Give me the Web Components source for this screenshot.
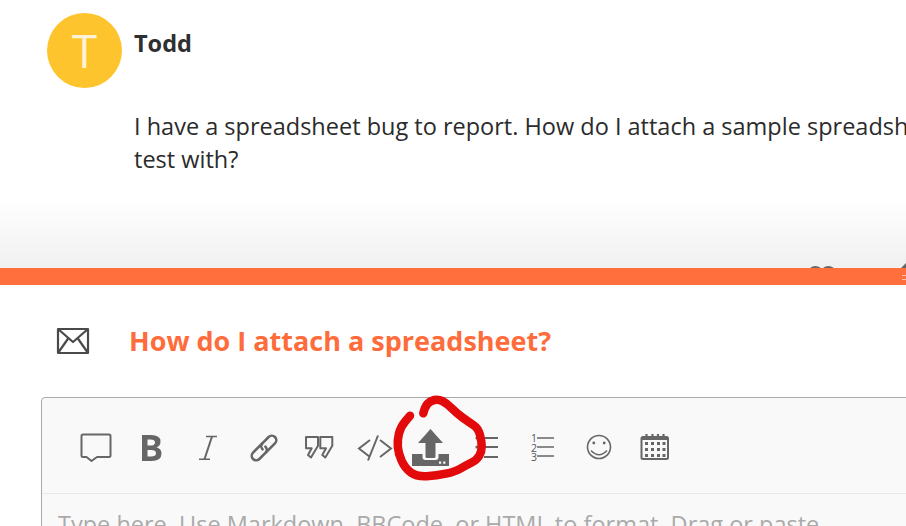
<!DOCTYPE html>
<html lang="en"><head><meta charset="utf-8"><title>Composer</title>
<style>
html,body{margin:0;height:526px;overflow:hidden;background:#fff}
body{font-family:"Open Sans",sans-serif;width:906px;position:relative}
</style></head><body>
<x-post name="Todd" initial="T">I have a spreadsheet bug to report. How do I attach a sample spreadsheet to test with?</x-post>
<x-composer title-text="How do I attach a spreadsheet?" placeholder="Type here. Use Markdown, BBCode, or HTML to format. Drag or paste images."></x-composer>
<script>
class XPost extends HTMLElement{constructor(){super();const n=this.getAttribute('name'),i=this.getAttribute('initial');
this.attachShadow({mode:'open'}).innerHTML=`<style>
:host{display:block;position:relative;height:268px;overflow:hidden;box-sizing:border-box;padding:13px 0 0 47px;background:linear-gradient(#fff 0,#fff 200px,#f0f0f0 268px)}
.row{display:flex;gap:12px;width:1000px}
.av{width:75px;height:75px;border-radius:50%;background:#fec42d;color:#fff3d6;font-size:46px;line-height:75px;text-align:center;flex:none}
.name{font-weight:700;font-size:23.500px;line-height:30px;color:#2f2f2f;margin-top:15px}
.msg{font-size:23.500px;line-height:33px;color:#2b2b2b;margin-top:52px;width:840px}
.peek{position:absolute;left:0;top:0}
</style><div class="row"><div class="av">${i}</div><div><div class="name">${n}</div><div class="msg"><slot></slot></div></div></div>
<svg class="peek" width="906" height="268" viewBox="0 0 906 268"><path d="M810 268Q815 264 821 268ZM823 268Q828 264 834 268ZM901 268L906 263V268Z" fill="#666"/></svg>`;}}
customElements.define('x-post',XPost);

const S='fill="none" stroke="#666"';
let calDots='';for(const y of [13,19,25])for(const x of [14,20,26,31.500])calDots+=`<rect x="${x}" y="${y}" width="3" height="3" fill="#666"/>`;
const I={
chat:`<path d="M12 5.500H38Q39.500 5.500 39.500 7V26.500Q39.500 28 38 28H26L20.500 32L15.500 28H12Q10.500 28 10.500 26.500V7Q10.500 5.500 12 5.500Z" ${S} stroke-width="2" stroke-linejoin="round"/>`,
bold:'<path fill-rule="evenodd" d="M15 6H24Q33.500 6 33.500 12.500Q33.500 17 29.500 18.200Q34.500 19.500 34.500 24.500Q34.500 32 24.500 32H15ZM20.500 10.500V16.500H23.500Q28 16.500 28 13.400Q28 10.500 23.500 10.500ZM20.500 21V27.500H24Q29 27.500 29 24.200Q29 21 24 21Z" fill="#666"/>',
italic:`<path d="M23 7.500H34M16 30.200H27" ${S} stroke-width="1.500"/><path d="M29 7.500L21.500 30.200" ${S} stroke-width="2"/>`,
link:`<g ${S} stroke-width="2.600" stroke-linecap="round" transform="rotate(-45 25 19)"><path d="M27 14.500H14a4.500 4.500 0 0 0 0 9H22.500a4.500 4.500 0 0 0 4.500 -4.500"/><path d="M23 23.500H36a4.500 4.500 0 0 0 0 -9H27.500a4.500 4.500 0 0 0 -4.500 4.500"/></g>`,
quote:`<path d="M11 8H23V16.700L16 28.500L13 26L16.700 19.300H11Z" ${S} stroke-width="2" stroke-linejoin="round"/><path d="M25.300 8H37.300V16.700L30.300 28.500L27.300 26L31 19.300H25.300Z" ${S} stroke-width="2" stroke-linejoin="round"/>`,
code:`<path d="M19 11L8 19.500L19 28M27 6.500L17 31.500M29 11L40 19.500L29 28" ${S} stroke-width="2"/>`,
upload:'<path fill-rule="evenodd" d="M5 25H15.500V28Q15.500 31 18.500 31H28.500Q31.500 31 31.500 28V25H42V37H5ZM32 32.500h2.200v2.200h-2.200zM36.200 32.500h2.200v2.200h-2.200z" fill="#666"/><path d="M23.500 0L36 14H28.500V27.500Q28.500 29 27 29H20Q18.500 29 18.500 27.500V14H11Z" fill="#666"/>',
list:'<path d="M21 9H35M21 18H35M21 28H35" stroke="#666" stroke-width="2"/><circle cx="14" cy="9" r="1.600" fill="#666"/><circle cx="14" cy="18" r="1.600" fill="#666"/><circle cx="14" cy="28" r="1.600" fill="#666"/>',
ol:'<path d="M18 9H35M18 18H35M18 27H35" stroke="#666" stroke-width="1.600"/>',
emoji:`<circle cx="24" cy="18" r="11.500" ${S} stroke-width="1.600"/><circle cx="18.800" cy="14" r="1.400" fill="#666"/><circle cx="29.200" cy="14" r="1.400" fill="#666"/><path d="M16 21.500Q24 30 32 21.500" ${S} stroke-width="1.500"/>`,
cal:`<path fill-rule="evenodd" d="M12 7H35.500Q38 7 38 9.500V28.500Q38 31 35.500 31H12Q9.500 31 9.500 28.500V9.500Q9.500 7 12 7ZM11.500 11V28.500Q11.500 29 12 29H35.500Q36 29 36 28.500V11Z" fill="#666"/><path d="M15.500 5v3M21.500 5v3M27 5v3M32.500 5v3" stroke="#666" stroke-width="2.200"/>${calDots}`
};
class XTool extends HTMLElement{constructor(){super();const k=this.getAttribute('icon');
const extra=k==='ol'?'<span class="n">1<br>2<br>3</span>':'';
this.attachShadow({mode:'open'}).innerHTML=`<style>
:host{display:block;position:relative;width:56px;height:36px;flex:none}
svg{display:block;width:48px;height:36px;margin:0 4px;overflow:visible}
.n{position:absolute;left:16px;top:5px;font-size:10.500px;line-height:9.500px;color:#555}
</style><svg viewBox="0 0 48 36">${I[k]}</svg>${extra}`;}}
customElements.define('x-tool',XTool);

class XComposer extends HTMLElement{constructor(){super();const t=this.getAttribute('title-text'),p=this.getAttribute('placeholder');
const tools=['chat','bold','italic','link','quote','code','upload','list','ol','emoji','cal'].map(k=>`<x-tool icon="${k}"></x-tool>`).join('');
this.attachShadow({mode:'open'}).innerHTML=`<style>
:host{display:block;position:relative;height:258px;overflow:hidden}
.bar{height:17px;background:#ff6f3d;position:relative}
.bar i{position:absolute;left:902px;width:4px;height:1px;background:#ffc4ae}
.head{display:flex;align-items:center;height:112px;padding-left:56px;gap:39px}
.title{font-weight:700;font-size:27px;line-height:36px;color:#ff6c3b;white-space:nowrap;margin-top:-1px}
.box{margin-left:41px;width:1000px;border:1px solid #aaa;border-radius:4px;background:#f9f9f9;height:200px;box-sizing:border-box}
.tb{height:96px;display:flex;align-items:center;padding-left:25px;border-bottom:1px solid #e9e9e9;box-sizing:border-box;padding-top:3px}
.ph{padding:15px 16px 0;font-size:23.500px;line-height:30px;color:#aaa;width:790px}
</style>
<div class="bar"><i style="top:7px"></i><i style="top:11px"></i></div>
<div class="head"><svg width="34" height="28" viewBox="0 0 34 28"><path d="M2 2H32V26H2ZM2 2L17 15L32 2M2 26L12.500 11M32 26L21.500 11" fill="none" stroke="#4a4a4a" stroke-width="2.200" stroke-linejoin="round"/></svg><div class="title">${t}</div></div>
<div class="box"><div class="tb">${tools}</div><div class="ph">${p}</div></div>`;}}
customElements.define('x-composer',XComposer);

const pts=[[423.3,413.3],[425,406.7],[430,401],[438.3,399],[446.7,403.3],[456.7,413.3],[468.3,421.7],[478.3,428.3],[481.7,441.7],[481.7,451.7],[476.7,460],[466.7,465],[455,471.7],[436.7,475.7],[416.7,476.7],[405,468.3],[398.3,453.3],[397.3,440],[400.7,426.7],[410,415.7]];
let d=`M${pts[0]}`;for(let i=1;i<pts.length-1;i++){const m=[(pts[i][0]+pts[i+1][0])/2,(pts[i][1]+pts[i+1][1])/2];d+=`Q${pts[i]} ${m}`;}d+=`L${pts[pts.length-1]}`;
class XMark extends HTMLElement{constructor(){super();this.attachShadow({mode:'open'}).innerHTML=`<style>:host{display:block;position:absolute;left:0;top:0;width:906px;height:526px;pointer-events:none}</style>
<svg width="906" height="526" viewBox="0 0 906 526"><path d="${d}" fill="none" stroke="#e20a0a" stroke-width="8.500" stroke-linecap="round" stroke-linejoin="round"/></svg>`;}}
customElements.define('x-mark',XMark);
document.body.appendChild(document.createElement('x-mark'));
</script>
</body></html>
